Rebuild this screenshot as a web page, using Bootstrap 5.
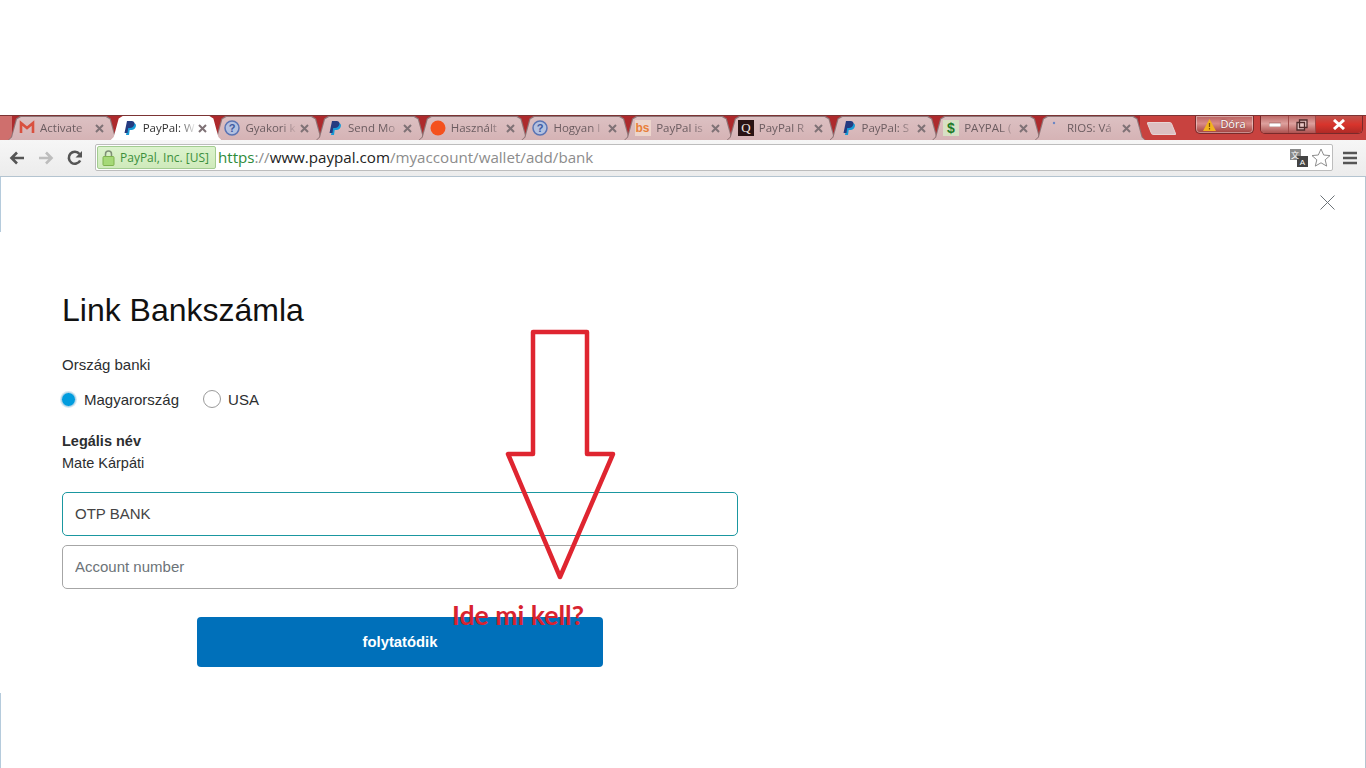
<!DOCTYPE html>
<html lang="hu">
<head>
  <meta charset="UTF-8" />
  <title>Link Bankszámla - PayPal</title>
  <link href="https://cdn.jsdelivr.net/npm/bootstrap@5.3.0/dist/css/bootstrap.min.css" rel="stylesheet" />
  <style>
    body {
      background: #fff;
      font-family: "Liberation Sans", Arial, sans-serif;
      height: 768px;
      overflow: hidden;
      position: relative;
    }
    .top-blank { height: 115px; background: #fff; }

    /* browser tab strip */
    .tab-strip {
      height: 25px;
      background: linear-gradient(to right, #cf6f6d 0, #cf6f6d 12px, #ad2a2d 12px, #ad2a2d 1140px, #c8423f 1140px);
      border-top: 1px solid #7c3434;
      font-family: "Open Sans", "Noto Sans", sans-serif;
    }
    .tab-list { padding-left: 8px; }
    .tab-item {
      position: relative;
      width: 110.7px;
      height: 24px;
      margin-right: -8px;
      background: #8f7476;
      clip-path: polygon(0 100%, 3px 88%, 8px 10%, 12px 0, calc(100% - 12px) 0, calc(100% - 8px) 10%, calc(100% - 3px) 88%, 100% 100%);
      font-size: 11.5px;
      color: #6b5c60;
    }
    .tab-item::before {
      content: "";
      position: absolute;
      inset: 1px 1px 0 1px;
      background: linear-gradient(#dcc0c2, #d5b3b5);
      clip-path: inherit;
    }
    .tab-item > * { position: relative; }
    .tab-item.tab-on { z-index: 2; color: #333; background: #fff; }
    .tab-item.tab-on::before { background: #fff; }
    .tab-fav { width: 16px; height: 16px; margin-left: 11px; flex: none; }
    .tab-title {
      width: 53px;
      margin-left: 5px;
      white-space: nowrap;
      overflow: hidden;
      -webkit-mask-image: linear-gradient(to right, #000 70%, transparent 100%);
      mask-image: linear-gradient(to right, #000 70%, transparent 100%);
    }
    .tab-x { width: 9px; height: 9px; margin-left: 2px; flex: none; }
    .tab-new {
      width: 25px;
      height: 13px;
      margin: 6px 0 0 11px;
      background: #dcc0c2;
      border: 1px solid #e7d4d4;
      transform: skewX(22deg);
      border-radius: 2px;
    }
    .win-controls { height: 18px; margin-right: 3px; }
    .win-user {
      width: 59px;
      margin-right: 6px;
      font-size: 11px;
      color: #fff;
      text-shadow: 0 0 2px #5a1f1f;
      background: linear-gradient(#b9615f, #d98b88 45%, #a03e3c);
      border: 1px solid #7a2a2a;
      border-top: 0;
      border-radius: 0 0 5px 5px;
      box-shadow: inset 0 0 0 1px rgba(255,255,255,.4);
    }
    .win-btns {
      border: 1px solid #7a2a2a;
      border-top: 0;
      border-radius: 0 0 5px 5px;
      overflow: hidden;
      box-shadow: inset 0 0 0 1px rgba(255,255,255,.4);
    }
    .win-btn { width: 27px; background: linear-gradient(#bd6a68, #dda09d 45%, #ad5250); }
    .win-btn + .win-btn { border-left: 1px solid #a04a48; }
    .win-close { width: 47px; background: linear-gradient(#c0524c, #d8342c 50%, #b02a26); }

    /* browser toolbar */
    .tool-bar {
      height: 37px;
      background: linear-gradient(#f6f6f6, #ececec);
      border-bottom: 1px solid #b4c4d0;
      padding: 4px 0 5px 0;
    }
    .nav-btns { width: 95px; padding-left: 9px; gap: 13px; }
    .omni-box {
      width: 1238px;
      height: 27px;
      background: #fff;
      border: 1px solid #bdbdbd;
      border-radius: 2px;
      padding-left: 1px;
      font-family: "Open Sans", "Noto Sans", sans-serif;
    }
    .ev-chip {
      width: 119px;
      height: 23px;
      background: linear-gradient(#dcf3cd, #cfeabb);
      border: 1px solid #a3cc91;
      border-radius: 2px;
      color: #3c8f3c;
      font-size: 12px;
      padding-left: 4px;
      gap: 5px;
      white-space: nowrap;
    }
    .url-text { font-size: 15.15px; margin-left: 2px; color: #8c8c8c; white-space: nowrap; }
    .url-https { color: #2e8b3a; }
    .url-host { color: #222; }
    .omni-icons { margin-left: auto; gap: 3px; padding-right: 1px; }
    .trans-box { width: 18px; height: 18px; }
    .menu-btn { width: 33px; }

    /* paypal page */
    .page-area {
      height: 591px;
      background: linear-gradient(to bottom, #b5cbdc 55px, transparent 55px, transparent 516px, #b5cbdc 516px) left top / 1px 100% no-repeat;
      border-right: 1px solid #b5c5d0;
    }
    .close-row { padding: 18px 30px 0 0; }
    .bank-form { width: 738px; padding-left: 62px; margin-top: 82px; }
    .bank-title { font-size: 32px; line-height: 36px; font-weight: 400; color: #111; margin: 0 0 27px; }
    .bank-label { font-size: 15px; line-height: 20px; color: #2c2e2f; margin: 0 0 12px; }
    .radio-row { height: 24px; margin-bottom: 19px; margin-left: -1px; gap: 24px; font-size: 15px; color: #2c2e2f; }
    .radio-row .form-check { padding-left: 0; margin: 0; min-height: 0; display: flex; align-items: center; gap: 8px; }
    .radio-row .form-check-label { padding-top: 2px; }
    .radio-row .form-check-input {
      float: none;
      margin: 0;
      width: 15px;
      height: 15px;
      border: 1px solid #9a9a9a;
    }
    .radio-row .form-check-input:checked {
      background: #009cde;
      border: 1px solid #bcd9ea;
      box-shadow: 0 0 0 1px #d6e8f2;
    }
    .radio-usa .form-check-input { width: 18px !important; height: 18px !important; }
    .radio-usa { gap: 7px !important; }
    .legal-name { font-size: 14.5px; line-height: 22px; color: #2c2e2f; margin-bottom: 18px; }
    .bank-input {
      height: 44px;
      font-size: 15px;
      padding: 0 12px 2px;
      border-radius: 5px;
      border: 1px solid #a6a6a6;
      color: #444;
      margin-bottom: 9px;
      font-family: inherit;
    }
    .bank-input::placeholder { color: #6c7378; }
    .bank-input.is-current { border-color: #1a97a0; }
    .go-btn {
      width: 406px;
      height: 50px;
      margin-top: 28px;
      background: #0070ba;
      border: 0;
      border-radius: 4px;
      font-size: 14.8px;
      font-weight: 700;
      color: #fff;
    }

    /* hand drawn note on top of the screenshot */
    .note-arrow { position: absolute; left: 0; top: 0; width: 1366px; height: 768px; pointer-events: none; }
    .note-text {
      position: absolute;
      left: 452px;
      top: 600px;
      font-family: Lato, "Open Sans", sans-serif;
      font-size: 26.6px;
      line-height: 30px;
      font-weight: 700;
      color: #d8232f;
    }
  </style>
</head>
<body>
  <svg width="0" height="0" class="position-absolute">
    <defs>
      <symbol id="ico-pp" viewBox="0 0 16 16">
        <path d="M6.500 3h4.500c2.300 0 3.400 1.300 2.900 3.300-.5 2.400-2.200 3.700-4.500 3.700H7.700L7 15H4z" fill="#179bd7"/>
        <path d="M5 1h4.500c2.300 0 3.400 1.300 2.900 3.300-.5 2.400-2.200 3.700-4.500 3.700H6.200L5.500 13H2.500z" fill="#253b80"/>
      </symbol>
      <symbol id="ico-help" viewBox="0 0 16 16">
        <circle cx="8" cy="8" r="7" fill="#b4c1e0" stroke="#5a74b4" stroke-width="1.500"/>
        <text x="8" y="12" text-anchor="middle" font-family="Liberation Sans, sans-serif" font-weight="700" font-size="11" fill="#3e5aa0">?</text>
      </symbol>
      <symbol id="ico-x" viewBox="0 0 9 9">
        <path d="M1 1l7 7M8 1L1 8" stroke="#7f7276" stroke-width="2" fill="none"/>
      </symbol>
    </defs>
  </svg>

  <div class="top-blank"></div>

  <div class="tab-strip d-flex justify-content-between">
    <div class="tab-list d-flex">
      <div class="tab-item d-flex align-items-center">
        <svg class="tab-fav" viewBox="0 0 16 16"><path d="M2 13V3l6 5 6-5v10" fill="none" stroke="#d9503f" stroke-width="2.600"/></svg>
        <span class="tab-title">Activate</span>
        <svg class="tab-x"><use href="#ico-x"/></svg>
      </div>
      <div class="tab-item tab-on d-flex align-items-center">
        <svg class="tab-fav"><use href="#ico-pp"/></svg>
        <span class="tab-title">PayPal: W</span>
        <svg class="tab-x"><use href="#ico-x"/></svg>
      </div>
      <div class="tab-item d-flex align-items-center">
        <svg class="tab-fav"><use href="#ico-help"/></svg>
        <span class="tab-title">Gyakori k</span>
        <svg class="tab-x"><use href="#ico-x"/></svg>
      </div>
      <div class="tab-item d-flex align-items-center">
        <svg class="tab-fav"><use href="#ico-pp"/></svg>
        <span class="tab-title">Send Mo</span>
        <svg class="tab-x"><use href="#ico-x"/></svg>
      </div>
      <div class="tab-item d-flex align-items-center">
        <svg class="tab-fav" viewBox="0 0 16 16"><circle cx="8" cy="8" r="7.500" fill="#f4511e"/></svg>
        <span class="tab-title">Használt</span>
        <svg class="tab-x"><use href="#ico-x"/></svg>
      </div>
      <div class="tab-item d-flex align-items-center">
        <svg class="tab-fav"><use href="#ico-help"/></svg>
        <span class="tab-title">Hogyan l</span>
        <svg class="tab-x"><use href="#ico-x"/></svg>
      </div>
      <div class="tab-item d-flex align-items-center">
        <svg class="tab-fav" viewBox="0 0 16 16">
          <rect width="16" height="16" fill="#ecd5cc"/>
          <text x="0.500" y="12" font-family="Liberation Sans, sans-serif" font-weight="700" font-size="12" fill="#e8803a">bs</text>
        </svg>
        <span class="tab-title">PayPal is</span>
        <svg class="tab-x"><use href="#ico-x"/></svg>
      </div>
      <div class="tab-item d-flex align-items-center">
        <svg class="tab-fav" viewBox="0 0 16 16">
          <rect width="16" height="16" fill="#2a1414"/>
          <text x="8" y="12" text-anchor="middle" font-family="Liberation Serif, serif" font-size="13" fill="#f0e6e0">Q</text>
        </svg>
        <span class="tab-title">PayPal R</span>
        <svg class="tab-x"><use href="#ico-x"/></svg>
      </div>
      <div class="tab-item d-flex align-items-center">
        <svg class="tab-fav"><use href="#ico-pp"/></svg>
        <span class="tab-title">PayPal: S</span>
        <svg class="tab-x"><use href="#ico-x"/></svg>
      </div>
      <div class="tab-item d-flex align-items-center">
        <svg class="tab-fav" viewBox="0 0 16 16">
          <rect width="16" height="16" fill="#d7e0c4"/>
          <text x="8" y="13" text-anchor="middle" font-family="Liberation Sans, sans-serif" font-weight="700" font-size="14" fill="#1c7a28">$</text>
        </svg>
        <span class="tab-title">PAYPAL (</span>
        <svg class="tab-x"><use href="#ico-x"/></svg>
      </div>
      <div class="tab-item d-flex align-items-center">
        <svg class="tab-fav" viewBox="0 0 16 16"><circle cx="8" cy="3" r="1.200" fill="#6b86c4"/></svg>
        <span class="tab-title">RIOS: Vá</span>
        <svg class="tab-x"><use href="#ico-x"/></svg>
      </div>
      <div class="tab-new"></div>
    </div>

    <div class="win-controls d-flex">
      <div class="win-user d-flex align-items-center justify-content-center gap-1">
        <svg width="13" height="12" viewBox="0 0 13 12"><path d="M6.500 0L13 12H0z" fill="#f2b21d"/><path d="M6.500 4v4M6.500 9v1.500" stroke="#7a4a00" stroke-width="1.200"/></svg>
        <span>Dóra</span>
      </div>
      <div class="win-btns d-flex">
        <div class="win-btn d-flex align-items-center justify-content-center">
          <svg width="12" height="5" viewBox="0 0 12 5"><rect width="12" height="4" y="1" fill="#fff" stroke="#8b4a48" stroke-width=".6"/></svg>
        </div>
        <div class="win-btn d-flex align-items-center justify-content-center">
          <svg width="12" height="12" viewBox="0 0 12 12"><path d="M3.500 1h7.500v7.500h-7.500zM1 3.500h7.500v7.500H1z" fill="#e9c8c6" stroke="#4d2a2a" stroke-width="1.300"/></svg>
        </div>
        <div class="win-btn win-close d-flex align-items-center justify-content-center">
          <svg width="14" height="11" viewBox="0 0 14 11"><path d="M2 1l10 9M12 1L2 10" stroke="#fff" stroke-width="3"/></svg>
        </div>
      </div>
    </div>
  </div>

  <div class="tool-bar d-flex align-items-center">
    <div class="nav-btns d-flex align-items-center">
      <svg width="16" height="14" viewBox="0 0 16 14"><path d="M15 7H3M8 1.500L2.500 7 8 12.500" fill="none" stroke="#555" stroke-width="2.600"/></svg>
      <svg width="16" height="14" viewBox="0 0 16 14"><path d="M1 7h12M8 1.500L13.500 7 8 12.500" fill="none" stroke="#bdbdbd" stroke-width="2.600"/></svg>
      <svg width="16" height="16" viewBox="0 0 16 16"><path d="M13.200 10.500A6 6 0 1 1 12.500 4" fill="none" stroke="#555" stroke-width="2.600"/><path d="M15 1v6.500H8.500z" fill="#555"/></svg>
    </div>
    <div class="omni-box d-flex align-items-center">
      <div class="ev-chip d-flex align-items-center">
        <svg width="13" height="17" viewBox="0 0 13 17"><path d="M3.500 8V5a3 3 0 0 1 6 0v3" fill="none" stroke="#7f8f76" stroke-width="1.500"/><rect x="1" y="7.500" width="11" height="9" rx="1" fill="#a5d977" stroke="#7fb24f"/></svg>
        <span>PayPal, Inc. [US]</span>
      </div>
      <div class="url-text"><span class="url-https">https</span>://<span class="url-host">www.paypal.com</span>/myaccount/wallet/add/bank</div>
      <div class="omni-icons d-flex align-items-center">
        <svg class="trans-box" viewBox="0 0 18 18">
          <rect x="0" y="0" width="11" height="11" fill="#8b8b8b"/>
          <rect x="7" y="7" width="11" height="11" fill="#444"/>
          <text x="5" y="8.500" text-anchor="middle" font-family="Noto Sans CJK SC, sans-serif" font-size="8" fill="#fff">文</text>
          <text x="12.500" y="16" text-anchor="middle" font-family="Liberation Sans, sans-serif" font-size="8" fill="#fff">A</text>
        </svg>
        <svg width="20" height="19" viewBox="0 0 20 19"><path d="M10 1l2.700 6 6.300.6-4.800 4.200 1.500 6.300L10 14.800l-5.700 3.300 1.500-6.300L1 7.600 7.300 7z" fill="#fff" stroke="#8d8d8d"/></svg>
      </div>
    </div>
    <div class="menu-btn d-flex justify-content-center">
      <svg width="14" height="14" viewBox="0 0 14 14"><path d="M0 2h14M0 7h14M0 12h14" stroke="#555" stroke-width="2.600"/></svg>
    </div>
  </div>

  <div class="page-area">
    <div class="close-row d-flex justify-content-end">
      <svg width="15" height="15" viewBox="0 0 15 15"><path d="M.5.500l14 14M14.500.500l-14 14" stroke="#6c7378" stroke-width="1" fill="none"/></svg>
    </div>

    <form class="bank-form" onsubmit="return false">
      <h1 class="bank-title">Link Bankszámla</h1>
      <p class="bank-label">Ország banki</p>
      <div class="radio-row d-flex align-items-center">
        <div class="form-check">
          <input class="form-check-input" type="radio" name="bankCountry" id="countryHu" checked />
          <label class="form-check-label" for="countryHu">Magyarország</label>
        </div>
        <div class="form-check radio-usa">
          <input class="form-check-input" type="radio" name="bankCountry" id="countryUs" />
          <label class="form-check-label" for="countryUs">USA</label>
        </div>
      </div>
      <div class="legal-name">
        <div class="fw-bold">Legális név</div>
        <div>Mate Kárpáti</div>
      </div>
      <input type="text" class="form-control bank-input is-current" value="OTP BANK" />
      <input type="text" class="form-control bank-input" placeholder="Account number" />
      <button type="submit" class="btn btn-primary go-btn d-block mx-auto">folytatódik</button>
    </form>
  </div>

  <svg class="note-arrow" viewBox="0 0 1366 768">
    <path d="M533 332H587V454H613L560 577 508 454H533z" fill="none" stroke="#df2530" stroke-width="4.500" stroke-linejoin="round"/>
  </svg>
  <div class="note-text">Ide mi kell?</div>

  <script src="https://cdn.jsdelivr.net/npm/bootstrap@5.3.0/dist/js/bootstrap.bundle.min.js"></script>
</body>
</html>
